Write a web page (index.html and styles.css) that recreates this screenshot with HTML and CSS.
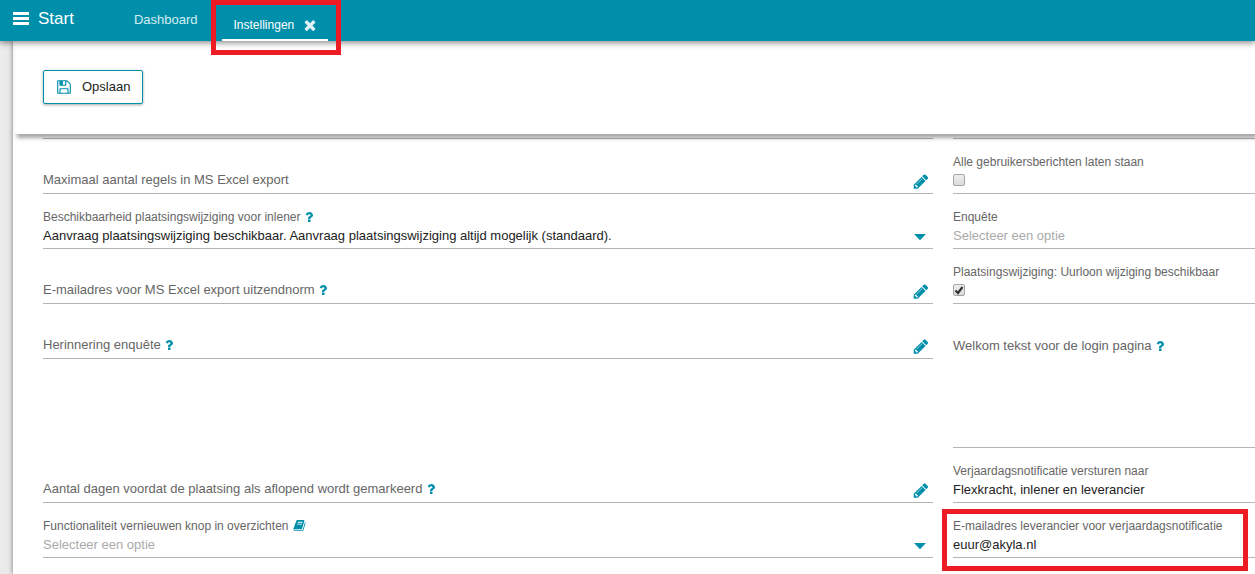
FILE: index.html
```html
<!DOCTYPE html>
<html lang="nl">
<head>
    <meta charset="UTF-8">
    <meta name="viewport" content="width=device-width, initial-scale=1.0">
    <title>Instellingen</title>
    <link rel="stylesheet" href="styles.css">
</head>
<body>
    <!-- iconen -->
    <svg class="sprite" aria-hidden="true">
        <symbol id="pencil" viewBox="0 0 1792 1792"><path d="M491 1536l91-91-235-235-91 91v107h128v128h107zm523-928q0-22-22-22-10 0-17 7l-542 542q-7 7-7 17 0 22 22 22 10 0 17-7l542-542q7-7 7-17zm-54-192l416 416-832 832h-416v-416zm683 96q0 53-37 90l-166 166-416-416 166-165q36-38 90-38 53 0 91 38l235 234q37 39 37 91z"/></symbol>
        <symbol id="question" viewBox="0 0 1792 1792"><path d="M1088 1256v240q0 16-12 28t-28 12h-240q-16 0-28-12t-12-28v-240q0-16 12-28t28-12h240q16 0 28 12t12 28zm316-600q0 54-15.5 101t-35 76.5-55 59.5-57.5 43.5-61 35.5q-41 23-68.5 65t-27.5 67q0 17-12 32.5t-28 15.5h-240q-15 0-25.5-18.5t-10.5-37.5v-45q0-83 65-156.5t143-108.5q59-27 84-56t25-76q0-42-46.5-74t-107.5-32q-65 0-108 29-35 25-107 115-13 16-31 16-12 0-25-8l-164-125q-13-10-15.5-25t5.5-28q160-266 464-266 80 0 161 31t146 83 106 127.5 41 158.5z"/></symbol>
        <symbol id="caret" viewBox="0 0 12 6"><path d="M0 0h12L6.5 5.7q-.5.5-1 0z"/></symbol>
    </svg>

    <header class="topbar">
        <button type="button" class="start">
            <svg class="icon-menu" viewBox="0 0 16 13"><path d="M0 0h16v3H0zM0 5h16v3H0zM0 10h16v3H0z"/></svg>
            Start
        </button>
        <nav class="tabs">
            <a class="tab" href="#">Dashboard</a>
            <div class="tab-active">
                <a class="tab-link" href="#">Instellingen</a>
                <button type="button" class="tab-close" aria-label="Sluiten">
                    <svg class="icon-close" viewBox="0 0 1792 1792"><path d="M1490 1322q0 40-28 68l-136 136q-28 28-68 28t-68-28l-294-294-294 294q-28 28-68 28t-68-28l-136-136q-28-28-28-68t28-68l294-294-294-294q-28-28-28-68t28-68l136-136q28-28 68-28t68 28l294 294 294-294q28-28 68-28t68 28l136 136q28 28 28 68t-28 68l-294 294 294 294q28 28 28 68z"/></svg>
                </button>
                <span class="marker marker-tab"></span>
            </div>
        </nav>
    </header>

    <form class="panel">
        <div class="toolbar">
            <button type="button" class="save">
                <svg class="icon-save" viewBox="0 0 1792 1792"><path d="M512 1536h768v-384h-768v384zm896 0h128v-896q0-14-10-38.5t-20-34.5l-281-281q-10-10-34-20t-39-10v416q0 40-28 68t-68 28h-576q-40 0-68-28t-28-68v-416h-128v1280h128v-416q0-40 28-68t68-28h832q40 0 68 28t28 68v416zm-384-928v-320q0-13-9.5-22.5t-22.5-9.5h-192q-13 0-22.5 9.5t-9.5 22.5v320q0 13 9.5 22.5t22.5 9.5h192q13 0 22.5-9.5t9.5-22.5zm640 32v928q0 40-28 68t-68 28h-1344q-40 0-68-28t-28-68v-1344q0-40 28-68t68-28h928q40 0 88 20t76 48l280 280q28 28 48 76t20 88z"/></svg>
                Opslaan
            </button>
        </div>

        <div class="fields">
            <div class="field-end"></div>
            <div class="field-end"></div>

            <div class="field">
                <div class="control">
                    <label class="inline-label" for="maxRegels">Maximaal aantal regels in MS Excel export</label>
                    <input class="value" type="text" id="maxRegels">
                    <button type="button" class="edit" aria-label="Bewerken"><svg class="icon-pencil"><use href="#pencil"/></svg></button>
                </div>
            </div>
            <div class="field">
                <label class="label" for="berichten">Alle gebruikersberichten laten staan</label>
                <input class="check" type="checkbox" id="berichten">
            </div>

            <div class="field">
                <label class="label" for="beschikbaarheid">Beschikbaarheid plaatsingswijziging voor inlener <svg class="icon-help"><use href="#question"/></svg></label>
                <div class="control">
                    <select class="value" id="beschikbaarheid">
                        <option>Aanvraag plaatsingswijziging beschikbaar. Aanvraag plaatsingswijziging altijd mogelijk (standaard).</option>
                    </select>
                    <svg class="icon-caret"><use href="#caret"/></svg>
                </div>
            </div>
            <div class="field">
                <label class="label" for="enquete">Enquête</label>
                <div class="control">
                    <select class="value placeholder" id="enquete">
                        <option>Selecteer een optie</option>
                    </select>
                </div>
            </div>

            <div class="field">
                <div class="control">
                    <label class="inline-label" for="emailExport">E-mailadres voor MS Excel export uitzendnorm <svg class="icon-help"><use href="#question"/></svg></label>
                    <input class="value" type="text" id="emailExport">
                    <button type="button" class="edit" aria-label="Bewerken"><svg class="icon-pencil"><use href="#pencil"/></svg></button>
                </div>
            </div>
            <div class="field">
                <label class="label" for="uurloon">Plaatsingswijziging: Uurloon wijziging beschikbaar</label>
                <input class="check" type="checkbox" id="uurloon" checked>
            </div>

            <div class="field">
                <div class="control">
                    <label class="inline-label" for="herinnering">Herinnering enquête <svg class="icon-help"><use href="#question"/></svg></label>
                    <input class="value" type="text" id="herinnering">
                    <button type="button" class="edit" aria-label="Bewerken"><svg class="icon-pencil"><use href="#pencil"/></svg></button>
                </div>
            </div>
            <div class="field field-text">
                <label class="inline-label" for="welkom">Welkom tekst voor de login pagina <svg class="icon-help"><use href="#question"/></svg></label>
                <textarea class="textarea" id="welkom"></textarea>
            </div>

            <div class="field">
                <div class="control">
                    <label class="inline-label" for="dagen">Aantal dagen voordat de plaatsing als aflopend wordt gemarkeerd <svg class="icon-help"><use href="#question"/></svg></label>
                    <input class="value" type="text" id="dagen">
                    <button type="button" class="edit" aria-label="Bewerken"><svg class="icon-pencil"><use href="#pencil"/></svg></button>
                </div>
            </div>
            <div class="field">
                <label class="label" for="verjaardag">Verjaardagsnotificatie versturen naar</label>
                <div class="control">
                    <select class="value" id="verjaardag">
                        <option>Flexkracht, inlener en leverancier</option>
                    </select>
                </div>
            </div>

            <div class="field">
                <label class="label" for="vernieuwen">Functionaliteit vernieuwen knop in overzichten
                    <svg class="icon-book" viewBox="0 0 1792 1792"><path d="M1703 478q40 57 18 129l-275 906q-19 64-76.5 107.5t-122.5 43.5h-923q-77 0-148.5-53.5t-99.5-131.5q-24-67-2-127 0-4 3-27t4-37q1-8-3-21.5t-3-19.5q2-11 8-21t16.5-23.5 16.5-23.5q23-38 45-91.5t30-91.5q3-10 .5-30t-.5-28q3-11 17-28t17-23q21-36 42-92t25-90q1-9-2.5-32t.5-28q4-13 22-30.5t22-22.5q19-26 42.5-84.5t27.5-96.5q1-8-3-25.5t-2-26.5q2-8 9-18t18-23 17-21q8-12 16.5-30.5t15-35 16-36 19.5-32 26.5-23.5 36-11.5 47.5 5.5l-1 3q38-9 51-9h761q74 0 114 56t18 130l-274 906q-36 119-71.5 153.5t-128.5 34.5h-869q-27 0-38 15-11 16-1 43 24 70 144 70h923q29 0 56-15.5t35-41.5l300-987q7-22 5-57 38 15 59 43zm-1064 2q-4 13 2 22.5t20 9.5h608q13 0 25.5-9.5t16.5-22.5l21-64q4-13-2-22.5t-20-9.5h-608q-13 0-25.5 9.5t-16.5 22.5zm-83 256q-4 13 2 22.5t20 9.5h608q13 0 25.5-9.5t16.5-22.5l21-64q4-13-2-22.5t-20-9.5h-608q-13 0-25.5 9.5t-16.5 22.5z"/></svg>
                </label>
                <div class="control">
                    <select class="value placeholder" id="vernieuwen">
                        <option>Selecteer een optie</option>
                    </select>
                    <svg class="icon-caret"><use href="#caret"/></svg>
                </div>
            </div>
            <div class="field">
                <label class="label" for="emailLeverancier">E-mailadres leverancier voor verjaardagsnotificatie</label>
                <div class="control">
                    <input class="value" type="text" id="emailLeverancier" value="euur@akyla.nl">
                </div>
                <span class="marker marker-field"></span>
            </div>
        </div>
    </form>
</body>
</html>
```
FILE: styles.css
```css
* {
    box-sizing: border-box;
}
body {
    margin: 0;
    min-height: 100vh;
    display: flex;
    flex-direction: column;
    background-color: #ebebeb;
    font-family: "Liberation Sans", Arial, sans-serif;
    font-size: 13px;
    color: #222;
}
button, input, select, textarea {
    font: inherit;
    color: inherit;
    margin: 0;
    padding: 0;
    border: none;
    border-radius: 0;
    background: none;
}
button {
    cursor: pointer;
}
svg {
    fill: #008fab;
    flex: none;
}
.sprite {
    display: none;
}

/* bovenbalk */
.topbar {
    position: relative;
    z-index: 3;
    display: flex;
    height: 41px;
    background-color: #008fab;
    box-shadow: 0 2px 6px rgba(0, 0, 0, 0.45);
}
.start {
    display: flex;
    align-items: center;
    gap: 9px;
    padding: 0 0 4px 13px;
    font-size: 17px;
    color: #fff;
}
.icon-menu {
    width: 16px;
    height: 13px;
    fill: #fff;
}
.tabs {
    display: flex;
    gap: 24px;
    margin-left: 60px;
}
.tab {
    display: flex;
    align-items: center;
    padding-bottom: 2px;
    color: #d5edf2;
    text-decoration: none;
}
.tab-active {
    position: relative;
    display: flex;
    align-items: center;
    gap: 8px;
    padding: 10px 10px 0 12px;
    border-bottom: 2px solid #fff;
}
.tab-link {
    font-size: 12px;
    color: #fff;
    text-decoration: none;
}
.tab-close {
    display: flex;
}
.icon-close {
    width: 16px;
    height: 16px;
    fill: #e0f2f5;
}

/* rode kaders */
.marker {
    position: absolute;
    border: 5px solid #ed1c24;
    pointer-events: none;
}
.marker-tab {
    top: 0;
    right: -13px;
    bottom: -16px;
    left: -11px;
}
.marker-field {
    top: 6px;
    right: 7px;
    bottom: -14px;
    left: -11px;
}

/* formulier */
.panel {
    flex: 1;
    margin-left: 13px;
    background-color: #fff;
    box-shadow: 0 0 5px rgba(0, 0, 0, 0.5);
}
.toolbar {
    position: relative;
    z-index: 2;
    height: 93px;
    margin-left: 2px;
    padding: 29px 28px;
    background-color: #fff;
    box-shadow: 2px 4px 4px rgba(0, 0, 0, 0.35);
}
.save {
    display: flex;
    align-items: center;
    gap: 10px;
    height: 34px;
    padding: 0 12px 1px;
    border: 1px solid #008fab;
    border-radius: 2px;
    background-color: #fff;
    box-shadow: 0 1px 3px rgba(0, 0, 0, 0.35);
}
.icon-save {
    width: 16px;
    height: 16px;
}
.fields {
    display: grid;
    grid-template-columns: 56fr 19fr;
    column-gap: 20px;
    align-items: start;
    padding-left: 30px;
}
.field-end {
    height: 5px;
    border-bottom: 1px solid #b5b5b5;
}
.field {
    position: relative;
    display: flex;
    flex-direction: column;
    min-width: 0;
    height: 55px;
    padding-top: 15px;
    border-bottom: 1px solid #b5b5b5;
}
.label {
    height: 16px;
    line-height: 16px;
    font-size: 12px;
    color: #666;
    white-space: nowrap;
}
.inline-label {
    line-height: 20px;
    color: #666;
    white-space: nowrap;
}
.control {
    display: flex;
    align-items: center;
    height: 20px;
}
.control:first-child {
    margin-top: 16px;
}
.value {
    flex: 1;
    min-width: 0;
    height: 20px;
    appearance: none;
    outline: none;
}
.placeholder {
    color: #aaa;
}
.icon-help {
    width: 14px;
    height: 14px;
    margin-left: -2px;
    vertical-align: -3px;
}
.icon-book {
    width: 13px;
    height: 13px;
    margin-left: 1px;
    vertical-align: -2px;
}
.edit {
    display: flex;
    align-self: flex-end;
    margin: 0 3px 0 0;
}
.icon-pencil {
    width: 18px;
    height: 17px;
}
.icon-caret {
    width: 12px;
    height: 6px;
    margin: 3px 7px 0 0;
}
.check {
    appearance: none;
    width: 12px;
    height: 12px;
    margin-top: 4px;
    border: 1px solid #a5a5a5;
    border-radius: 2px;
    background: linear-gradient(#eee, #dcdcdc);
}
.check:checked {
    background: url("data:image/svg+xml,%3Csvg xmlns='http://www.w3.org/2000/svg' viewBox='0 0 10 10'%3E%3Cpath d='M1.5 5.5L4 8L8.5 2' fill='none' stroke='%23333' stroke-width='2.2'/%3E%3C/svg%3E"), linear-gradient(#eee, #dcdcdc);
}
.field-text {
    height: 144px;
    padding-top: 32px;
}
.textarea {
    flex: 1;
    resize: none;
    outline: none;
}
```
